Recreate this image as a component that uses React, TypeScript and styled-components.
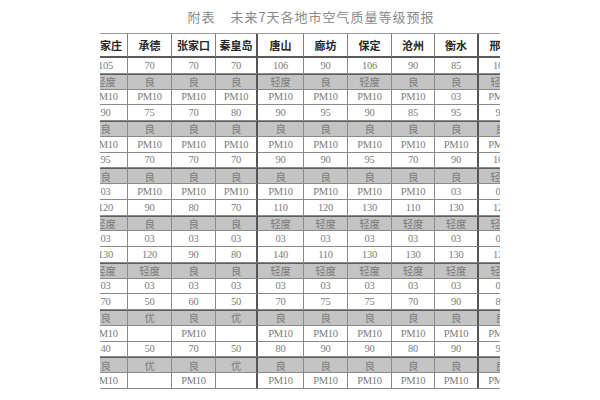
import React, { FC } from "react";
import styled, { createGlobalStyle } from "styled-components";

const GlobalStyle = createGlobalStyle`
  html, body {
    margin: 0;
    padding: 0;
    background: #ffffff;
  }
  body {
    font-family: "Liberation Serif", "Noto Sans CJK SC", serif;
  }
`;

const cities = [
  "石家庄",
  "承德",
  "张家口",
  "秦皇岛",
  "唐山",
  "廊坊",
  "保定",
  "沧州",
  "衡水",
  "邢台",
];

const colWidths = [44, 44, 44, 42, 46, 44, 44, 43, 44, 44];
const thickAfter = [3, 8];

const rows: string[][] = [
  ["105", "70", "70", "70", "106", "90", "106", "90", "85", "105"],
  ["轻度", "良", "良", "良", "轻度", "良", "轻度", "良", "良", "轻度"],
  ["PM10", "PM10", "PM10", "PM10", "PM10", "PM10", "PM10", "PM10", "03", "PM10"],
  ["90", "75", "70", "80", "90", "95", "90", "85", "95", "95"],
  ["良", "良", "良", "良", "良", "良", "良", "良", "良", "良"],
  ["PM10", "PM10", "PM10", "PM10", "PM10", "PM10", "PM10", "PM10", "PM10", "PM10"],
  ["95", "70", "70", "70", "90", "90", "95", "70", "90", "105"],
  ["良", "良", "良", "良", "良", "良", "良", "良", "良", "轻度"],
  ["03", "PM10", "PM10", "PM10", "PM10", "PM10", "PM10", "PM10", "03", "03"],
  ["120", "90", "80", "70", "110", "120", "130", "110", "130", "120"],
  ["轻度", "良", "良", "良", "轻度", "轻度", "轻度", "轻度", "轻度", "轻度"],
  ["03", "03", "03", "03", "03", "03", "03", "03", "03", "03"],
  ["130", "120", "90", "80", "140", "110", "130", "130", "130", "130"],
  ["轻度", "轻度", "良", "良", "轻度", "轻度", "轻度", "轻度", "轻度", "轻度"],
  ["03", "03", "03", "03", "03", "03", "03", "03", "03", "03"],
  ["70", "50", "60", "50", "70", "75", "75", "70", "90", "80"],
  ["良", "优", "良", "优", "良", "良", "良", "良", "良", "良"],
  ["PM10", "", "PM10", "", "PM10", "PM10", "PM10", "PM10", "PM10", "PM10"],
  ["40", "50", "70", "50", "80", "90", "90", "80", "90", "90"],
  ["良", "优", "良", "优", "良", "良", "良", "良", "良", "良"],
  ["PM10", "", "PM10", "", "PM10", "PM10", "PM10", "PM10", "PM10", "PM10"],
];

const App: FC = () => {
  return (
    <Page>
      <GlobalStyle />
      <Title>
        <span>附表</span>
        <span>未来7天各地市空气质量等级预报</span>
      </Title>
      <Sheet>
        <Grid>
          {cities.map((c, i) => (
            <HeadCell key={c} $thick={thickAfter.includes(i)}>
              {c}
            </HeadCell>
          ))}
          {rows.map((row, r) =>
            row.map((v, i) => (
              <Cell
                key={`${r}-${i}`}
                $shade={r % 3 === 1}
                $thick={thickAfter.includes(i)}
              >
                {v}
              </Cell>
            ))
          )}
        </Grid>
      </Sheet>
    </Page>
  );
};

export default App;

const Page = styled.div`
  width: 600px;
  height: 400px;
  padding-top: 10px;
  box-sizing: border-box;
  overflow: hidden;
`;

const Title = styled.div`
  display: flex;
  justify-content: center;
  gap: 15px;
  padding-left: 22px;
  height: 14px;
  margin-bottom: 9px;
  font-family: "Noto Sans CJK SC", sans-serif;
  font-size: 13px;
  line-height: 14px;
  letter-spacing: 1px;
  color: #8a8a8a;
`;

const Sheet = styled.div`
  width: 400px;
  margin: 0 auto;
  overflow: hidden;
`;

const Grid = styled.div`
  display: grid;
  margin-left: -17px;
  width: max-content;
  grid-template-columns: ${colWidths.map((w) => `${w}px`).join(" ")};
  grid-template-rows: 24px repeat(21, 15.75px);
  border-top: 1px solid #9a9a9a;
  border-left: 1px solid #9a9a9a;
`;

const HeadCell = styled.div<{ $thick?: boolean }>`
  display: flex;
  align-items: center;
  justify-content: center;
  box-sizing: border-box;
  border-right: ${(p) => (p.$thick ? "2px solid #555" : "1px solid #808080")};
  border-bottom: 2px solid #5a5a5a;
  font-family: "Noto Sans CJK SC", sans-serif;
  font-weight: 700;
  font-size: 11px;
  color: #262626;
`;

const Cell = styled.div<{ $shade?: boolean; $thick?: boolean }>`
  display: flex;
  align-items: center;
  justify-content: center;
  box-sizing: border-box;
  background: ${(p) => (p.$shade ? "#c4c4c4" : "#ffffff")};
  border-right: ${(p) => (p.$thick ? "2px solid #555" : "1px solid #8a8a8a")};
  border-bottom: 1px solid #8a8a8a;
  border-top: ${(p) => (p.$shade ? "1px solid #5e5e5e" : "none")};
  font-family: "Liberation Serif", "Noto Sans CJK SC", serif;
  font-size: 10.5px;
  letter-spacing: -0.3px;
  color: #7c7c7c;
  white-space: nowrap;
`;
